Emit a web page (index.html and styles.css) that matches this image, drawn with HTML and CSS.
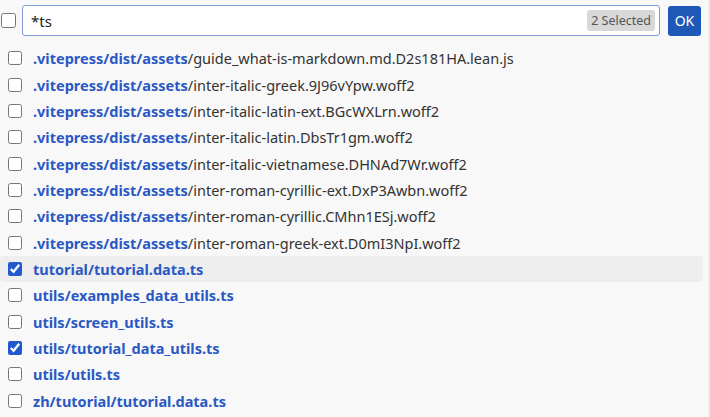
FILE: index.html
```html
<!DOCTYPE html>
<html>
<head>
<meta charset="utf-8">
<link rel="stylesheet" href="styles.css">
</head>
<body>
<div class="app">
  <div class="header">
    <input type="checkbox" class="cb head-cb">
    <div class="search">
      <span class="query">*ts</span>
      <span class="badge">2 Selected</span>
    </div>
    <button class="ok">OK</button>
  </div>
  <ul class="list">
    <li class="row"><input type="checkbox" class="cb"><span class="path"><b>.vitepress/dist/assets</b>/guide_what-is-markdown.md.D2s181HA.lean.js</span></li>
    <li class="row"><input type="checkbox" class="cb"><span class="path"><b>.vitepress/dist/assets</b>/inter-italic-greek.9J96vYpw.woff2</span></li>
    <li class="row"><input type="checkbox" class="cb"><span class="path"><b>.vitepress/dist/assets</b>/inter-italic-latin-ext.BGcWXLrn.woff2</span></li>
    <li class="row"><input type="checkbox" class="cb"><span class="path"><b>.vitepress/dist/assets</b>/inter-italic-latin.DbsTr1gm.woff2</span></li>
    <li class="row"><input type="checkbox" class="cb"><span class="path"><b>.vitepress/dist/assets</b>/inter-italic-vietnamese.DHNAd7Wr.woff2</span></li>
    <li class="row"><input type="checkbox" class="cb"><span class="path"><b>.vitepress/dist/assets</b>/inter-roman-cyrillic-ext.DxP3Awbn.woff2</span></li>
    <li class="row"><input type="checkbox" class="cb"><span class="path"><b>.vitepress/dist/assets</b>/inter-roman-cyrillic.CMhn1ESj.woff2</span></li>
    <li class="row"><input type="checkbox" class="cb"><span class="path"><b>.vitepress/dist/assets</b>/inter-roman-greek-ext.D0mI3NpI.woff2</span></li>
    <li class="row active"><input type="checkbox" class="cb" checked><span class="path"><b>tutorial/tutorial.data.ts</b></span></li>
    <li class="row"><input type="checkbox" class="cb"><span class="path"><b>utils/examples_data_utils.ts</b></span></li>
    <li class="row"><input type="checkbox" class="cb"><span class="path"><b>utils/screen_utils.ts</b></span></li>
    <li class="row"><input type="checkbox" class="cb" checked><span class="path"><b>utils/tutorial_data_utils.ts</b></span></li>
    <li class="row"><input type="checkbox" class="cb"><span class="path"><b>utils/utils.ts</b></span></li>
    <li class="row"><input type="checkbox" class="cb"><span class="path"><b>zh/tutorial/tutorial.data.ts</b></span></li>
  </ul>
</div>
</body>
</html>
```
FILE: styles.css
```css
html, body {
  margin: 0;
  padding: 0;
  background: #f8f8f8;
  height: 100%;
  overflow: hidden;
}
body {
  font-family: "Noto Sans", "Open Sans", sans-serif;
  color: #333;
  border-right: 2px solid #ececec;
  box-sizing: border-box;
}
.app {
  display: flex;
  flex-direction: column;
}
.header {
  display: flex;
  align-items: center;
  padding: 5px 7px 0 0;
  height: 31px;
}
.cb {
  width: 14px;
  height: 14px;
  margin: 0;
  accent-color: #2259cc;
}
.head-cb {
  width: 15px;
  height: 15px;
  margin: 0 6px 0 1px;
}
.search {
  flex: 1;
  height: 31px;
  box-sizing: border-box;
  border: 1px solid #7a9bd6;
  border-radius: 3px;
  background: #fff;
  display: flex;
  align-items: center;
  justify-content: space-between;
  padding: 0 4px 0 8px;
}
.query {
  font-size: 15px;
  color: #222;
}
.badge {
  background: #d8d8d8;
  color: #555;
  font-size: 12.5px;
  border-radius: 3px;
  padding: 1px 4px;
  line-height: 19px;
}
.ok {
  margin-left: 8px;
  width: 33px;
  height: 30px;
  border: none;
  border-radius: 3px;
  background: #1f59b8;
  color: #fff;
  font-family: "Noto Sans", sans-serif;
  font-size: 14px;
  padding: 0;
}
.list {
  list-style: none;
  margin: 0;
  padding: 9px 0 0 0;
}
.row {
  display: flex;
  align-items: center;
  height: 26.35px;
  padding-left: 8px;
  margin-right: 5px;
  border-radius: 4px;
  font-size: 14.5px;
  white-space: nowrap;
}
.row.active {
  background: #eeeeee;
}
.row .cb {
  margin-right: 11px;
}
.path {
  color: #333;
}
.path b {
  color: #2a58c4;
  font-weight: 700;
}
```
